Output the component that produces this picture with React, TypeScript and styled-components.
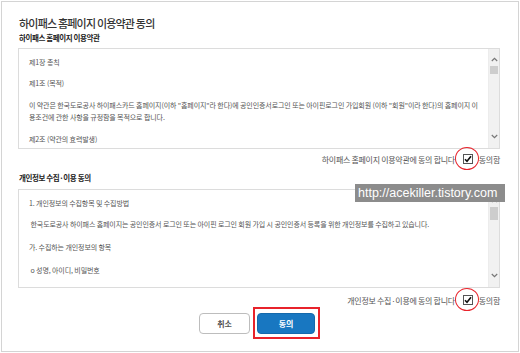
import React from "react";
import styled, { createGlobalStyle } from "styled-components";

const Global = createGlobalStyle`
  html, body { margin: 0; padding: 0; background: #ffffff; }
  * { box-sizing: border-box; }
`;

const FONT = `"Noto Sans CJK KR", "Noto Sans", sans-serif`;

const Frame = styled.div`
  position: relative;
  border: 1px solid #d4d4d4;
  margin: 1px 0 0 1px;
  width: 518px;
  height: 351px;
  padding: 13px 18px 0 15px;
  font-family: ${FONT};
  color: #444;
  display: flex;
  flex-direction: column;
`;

const Title = styled.h1`
  margin: 0;
  font-size: 11px;
  line-height: 16px;
  font-weight: 500;
  color: #333;
  letter-spacing: -0.8px;
  padding-left: 2px;
`;

const SectionLabel = styled.h2<{ $top: number }>`
  margin: ${(p) => p.$top}px 0 0 0;
  font-size: 7.5px;
  line-height: 12px;
  font-weight: 700;
  color: #222;
  letter-spacing: -0.4px;
  padding-left: 2px;
`;

const ScrollBox = styled.div<{ $h: number; $top: number }>`
  margin-top: ${(p) => p.$top}px;
  height: ${(p) => p.$h}px;
  border: 1px solid #dcdcdc;
  display: flex;
  margin-left: 1px;
`;

const Content = styled.div`
  flex: 1;
  overflow: hidden;
  padding: 7px 6px 0 10px;
`;

const Line = styled.p<{ $gap: number }>`
  margin: ${(p) => p.$gap}px 0 0 0;
  font-size: 7px;
  line-height: 12px;
  color: #555;
  letter-spacing: -0.11px;
  white-space: pre-wrap;
`;

const Track = styled.div`
  width: 11px;
  background: #f1f1f1;
  display: flex;
  flex-direction: column;
  align-items: center;
  border-left: 1px solid #ececec;
`;

const Arrow = styled.div<{ $down?: boolean }>`
  height: 9px;
  width: 100%;
  display: flex;
  align-items: center;
  justify-content: center;
  margin-top: ${(p) => (p.$down ? "auto" : "6px")};
  margin-bottom: ${(p) => (p.$down ? "7px" : "0")};
`;

const Thumb = styled.div<{ $h: number }>`
  width: 8px;
  height: ${(p) => p.$h}px;
  background: #cdcdcd;
  margin-top: 2px;
`;

const AgreeRow = styled.div<{ $top: number }>`
  margin-top: ${(p) => p.$top}px;
  display: flex;
  justify-content: flex-end;
  align-items: center;
  height: 12px;
  font-size: 8px;
  color: #555;
  letter-spacing: -0.3px;
`;

const AgreeText = styled.span`
  margin-right: 8px;
`;

const CheckWrap = styled.span`
  position: relative;
  display: inline-flex;
  width: 10px;
  height: 10px;
  margin-right: 6px;
`;

const Check = styled.span`
  width: 10px;
  height: 10px;
  border: 1px solid #555;
  background: #fff;
  display: flex;
  align-items: center;
  justify-content: center;
`;

const RedCircle = styled.span`
  position: absolute;
  left: -8px;
  top: -7px;
  width: 24px;
  height: 23px;
  border: 1.5px solid #e8232b;
  border-radius: 50%;
`;

const AgreeLabel = styled.span`
  margin-right: 0;
`;

const Buttons = styled.div`
  margin-top: 7px;
  display: flex;
  justify-content: center;
  gap: 7px;
  padding-right: 3px;
`;

const Button = styled.button<{ $primary?: boolean }>`
  position: relative;
  height: 21px;
  width: ${(p) => (p.$primary ? 58 : 51)}px;
  border-radius: 4px;
  font-family: ${FONT};
  font-size: 8px;
  font-weight: 700;
  letter-spacing: -0.2px;
  padding: 0;
  color: ${(p) => (p.$primary ? "#ffffff" : "#555")};
  background: ${(p) => (p.$primary ? "#1877c1" : "#ffffff")};
  border: 1px solid ${(p) => (p.$primary ? "#1569ab" : "#bdbdbd")};
`;

const RedRect = styled.span`
  position: absolute;
  left: -5px;
  top: -7px;
  right: -6px;
  bottom: -6px;
  border: 2px solid #e8232b;
`;

const Watermark = styled.div`
  position: absolute;
  left: 353px;
  top: 182px;
  width: 150px;
  height: 18px;
  background: #8c8c8c;
  color: #fff;
  font-family: "Liberation Sans", Arial, sans-serif;
  font-size: 12.5px;
  line-height: 18px;
  padding-left: 3px;
  white-space: nowrap;
`;

const UpIcon = () => (
  <svg width="7" height="5" viewBox="0 0 7 5">
    <path d="M0.8 4 L3.5 1.3 L6.2 4" fill="none" stroke="#777" strokeWidth="1.2" />
  </svg>
);
const DownIcon = () => (
  <svg width="7" height="5" viewBox="0 0 7 5">
    <path d="M0.8 1 L3.5 3.7 L6.2 1" fill="none" stroke="#777" strokeWidth="1.2" />
  </svg>
);

const CheckMark = () => (
  <svg width="8" height="8" viewBox="0 0 8 8">
    <path d="M1 4.2 L3 6.3 L7 1.2" fill="none" stroke="#111" strokeWidth="1.6" />
  </svg>
);

const Scrollbar = ({ thumb }: { thumb: number }) => (
  <Track>
    <Arrow>
      <UpIcon />
    </Arrow>
    <Thumb $h={thumb} />
    <Arrow $down>
      <DownIcon />
    </Arrow>
  </Track>
);

const Agree = ({ text, top }: { text: string; top: number }) => (
  <AgreeRow $top={top}>
    <AgreeText>{text}</AgreeText>
    <CheckWrap>
      <Check>
        <CheckMark />
      </Check>
      <RedCircle />
    </CheckWrap>
    <AgreeLabel>동의함</AgreeLabel>
  </AgreeRow>
);

export default function App() {
  return (
    <>
      <Global />
      <Frame>
        <Title>하이패스 홈페이지 이용약관 동의</Title>
        <SectionLabel $top={1}>하이패스 홈페이지 이용약관</SectionLabel>
        <ScrollBox $h={101} $top={4}>
          <Content>
            <Line $gap={0}>제1장 총칙</Line>
            <Line $gap={9}>제1조 (목적)</Line>
            <Line $gap={10}>
              이 약관은 한국도로공사 하이패스카드 홈페이지(이하 "홈페이지"라 한다)에 공인인증서로그인 또는 아이핀로그인 가입회원 (이하 "회원"이라 한다)의 홈페이지 이용조건에 관한 사항을 규정함을 목적으로 합니다.
            </Line>
            <Line $gap={10}>제2조 (약관의 효력발생)</Line>
          </Content>
          <Scrollbar thumb={8} />
        </ScrollBox>
        <Agree text="하이패스 홈페이지 이용약관에 동의 합니다" top={4} />
        <SectionLabel $top={7}>개인정보 수집·이용 동의</SectionLabel>
        <ScrollBox $h={99} $top={5}>
          <Content>
            <Line $gap={0}>1. 개인정보의 수집항목 및 수집방법</Line>
            <Line $gap={9}> 한국도로공사 하이패스 홈페이지는 공인인증서 로그인 또는 아이핀 로그인 회원 가입 시 공인인증서 등록을 위한 개인정보를 수집하고 있습니다.</Line>
            <Line $gap={11}>가. 수집하는 개인정보의 항목</Line>
            <Line $gap={11}> o 성명, 아이디, 비밀번호</Line>
          </Content>
          <Scrollbar thumb={13} />
        </ScrollBox>
        <Agree text="개인정보 수집·이용에 동의 합니다" top={6} />
        <Buttons>
          <Button>취소</Button>
          <Button $primary>
            동의
            <RedRect />
          </Button>
        </Buttons>
        <Watermark>http://acekiller.tistory.com</Watermark>
      </Frame>
    </>
  );
}
